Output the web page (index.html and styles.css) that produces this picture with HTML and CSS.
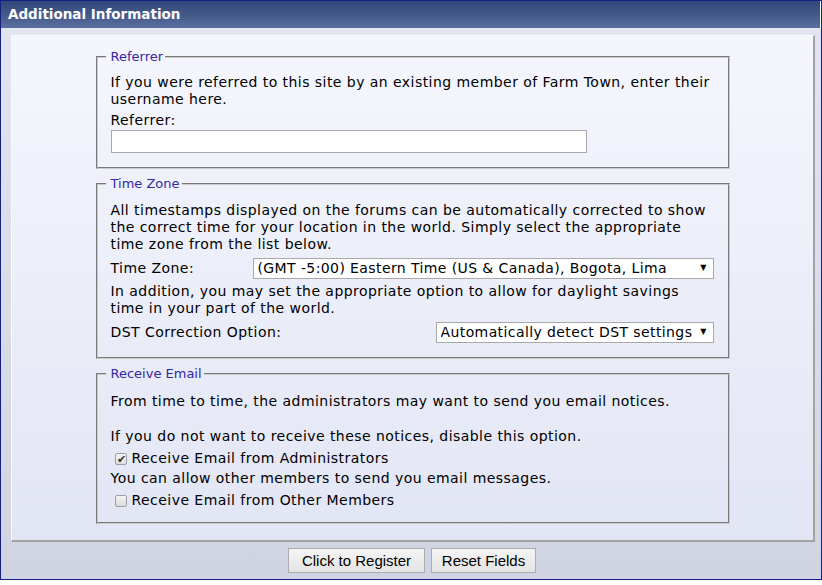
FILE: index.html
```html
<!DOCTYPE html>
<html>
<head>
<meta charset="utf-8">
<title>Additional Information</title>
<link rel="stylesheet" href="styles.css">
</head>
<body>
<div class="frame">
  <div class="header">Additional Information</div>
  <div class="content">
    <div class="panel">
      <fieldset class="group group-referrer">
        <legend>Referrer</legend>
        <p class="text">If you were referred to this site by an existing member of Farm Town, enter their username here.</p>
        <p class="label">Referrer:</p>
        <input class="textbox" type="text">
      </fieldset>

      <fieldset class="group group-tz">
        <legend>Time Zone</legend>
        <p class="text">All timestamps displayed on the forums can be automatically corrected to show the correct time for your location in the world. Simply select the appropriate time zone from the list below.</p>
        <div class="row row-tz">
          <span class="row-label">Time Zone:</span>
          <span class="select-wrap select-tz">
            <select class="select"><option>(GMT -5:00) Eastern Time (US &amp; Canada), Bogota, Lima</option></select>
            <span class="arrow">▼</span>
          </span>
        </div>
        <p class="text text-dst">In addition, you may set the appropriate option to allow for daylight savings time in your part of the world.</p>
        <div class="row row-dst">
          <span class="row-label">DST Correction Option:</span>
          <span class="select-wrap select-dst">
            <select class="select"><option>Automatically detect DST settings</option></select>
            <span class="arrow">▼</span>
          </span>
        </div>
      </fieldset>

      <fieldset class="group group-email">
        <legend>Receive Email</legend>
        <p class="text">From time to time, the administrators may want to send you email notices.</p>
        <p class="text text-gap">If you do not want to receive these notices, disable this option.</p>
        <label class="check-row"><input class="check" type="checkbox" checked><span>Receive Email from Administrators</span></label>
        <p class="text text-mid">You can allow other members to send you email messages.</p>
        <label class="check-row"><input class="check" type="checkbox"><span>Receive Email from Other Members</span></label>
      </fieldset>
    </div>
    <div class="actions">
      <button class="btn btn-register" type="button">Click to Register</button>
      <button class="btn btn-reset" type="button">Reset Fields</button>
    </div>
  </div>
</div>
</body>
</html>
```
FILE: styles.css
```css
* { box-sizing: border-box; }

html, body {
  margin: 0;
  padding: 0;
  background: #ffffff;
}

.frame {
  width: 822px;
  height: 580px;
  border: 1px solid #18207f;
  display: flex;
  flex-direction: column;
  font-family: "DejaVu Sans", Verdana, sans-serif;
  color: #000;
}

.header {
  height: 27px;
  flex: none;
  background: linear-gradient(to bottom, #2f4879 0%, #43598a 50%, #5b6f9f 100%);
  color: #ffffff;
  font-family: "DejaVu Sans", Verdana, sans-serif;
  font-weight: bold;
  font-size: 13.5px;
  line-height: 27px;
  padding-left: 7px;
  margin-right: 1px;
}

.content {
  flex: 1;
  background: linear-gradient(to bottom, #e2e5f0 0%, #d0d3e1 100%);
  padding: 7px 6px 0 10px;
  display: flex;
  flex-direction: column;
}

.panel {
  background: linear-gradient(to bottom, #f5f6fd 0%, #e2e5f4 100%);
  border-style: solid;
  border-width: 1px 2px 2px 1px;
  border-color: #fafaff #a3a3a3 #a3a3a3 #fafaff;
  padding: 13px 0 16px 0;
  height: 507px;
}

.group {
  width: 634px;
  margin: 0 auto;
  border: 2px groove #cccccc;
  padding: 10px 12px 14px 13px;
  font-size: 14px;
  line-height: 17px;
  letter-spacing: 0.45px;
}

.group + .group {
  margin-top: 7px;
}

.group legend {
  font-size: 13px;
  line-height: 16px;
  letter-spacing: 0;
  color: #3327a3;
  padding: 0 2px 0 5px;
  margin-left: -5px;
}

.text {
  margin: 0;
}

.label {
  margin: 4px 0 0 0;
}

.textbox {
  display: block;
  width: 476px;
  height: 23px;
  margin: 1px 0 0 0;
  border: 1px solid #a9a9a9;
  background: #ffffff;
  padding: 0 4px;
  font: inherit;
}

.group-referrer {
  padding-top: 9px;
}

.group-tz {
  padding-bottom: 13px;
}

.row {
  display: flex;
  align-items: center;
  justify-content: space-between;
  height: 23px;
  margin-top: 4px;
  margin-right: 2px;
}

.text-dst {
  margin-top: 3px;
}

.select-wrap {
  position: relative;
  display: block;
  height: 21px;
}

.select-tz { width: 461px; }
.select-dst { width: 278px; }

.select {
  -webkit-appearance: none;
  appearance: none;
  width: 100%;
  height: 21px;
  border: 1px solid #a9a9a9;
  border-radius: 0;
  background: #ffffff;
  color: #000;
  font-family: "DejaVu Sans", Verdana, sans-serif;
  font-size: 14px;
  letter-spacing: 0.4px;
  line-height: 19px;
  padding: 0 16px 0 4px;
  margin: 0;
}

.arrow {
  position: absolute;
  right: 7px;
  top: 5px;
  font-size: 8px;
  line-height: 10px;
  letter-spacing: 0;
  color: #000;
  pointer-events: none;
}

.group-email {
  padding-top: 11px;
  padding-bottom: 11px;
}

.text-gap {
  margin-top: 18px;
}

.text-mid {
  margin-top: 1px;
}

.check-row {
  display: flex;
  align-items: center;
  height: 21px;
  margin-top: 3px;
  padding-left: 4px;
}

.check {
  -webkit-appearance: none;
  appearance: none;
  width: 12px;
  height: 12px;
  margin: 0 5px 0 0;
  border: 1px solid #a0a0a0;
  border-radius: 2px;
  background: linear-gradient(to bottom, #f4f4f4, #dcdcdc);
  position: relative;
  flex: none;
}

.check:checked::after {
  content: "✔";
  position: absolute;
  left: 1px;
  top: -1px;
  font-size: 11px;
  line-height: 12px;
  color: #333;
}

.actions {
  display: flex;
  justify-content: center;
  gap: 6px;
  padding-top: 6px;
  padding-right: 2px;
}

.btn {
  height: 25px;
  border: 1px solid #adadad;
  border-radius: 0;
  background: linear-gradient(to bottom, #f4f4f4, #e4e4e4);
  font-family: "Liberation Sans", Arial, sans-serif;
  font-size: 15px;
  color: #000;
  padding: 0 8px;
  margin: 0;
}

.btn-register { width: 137px; }
.btn-reset { width: 105px; }
```
